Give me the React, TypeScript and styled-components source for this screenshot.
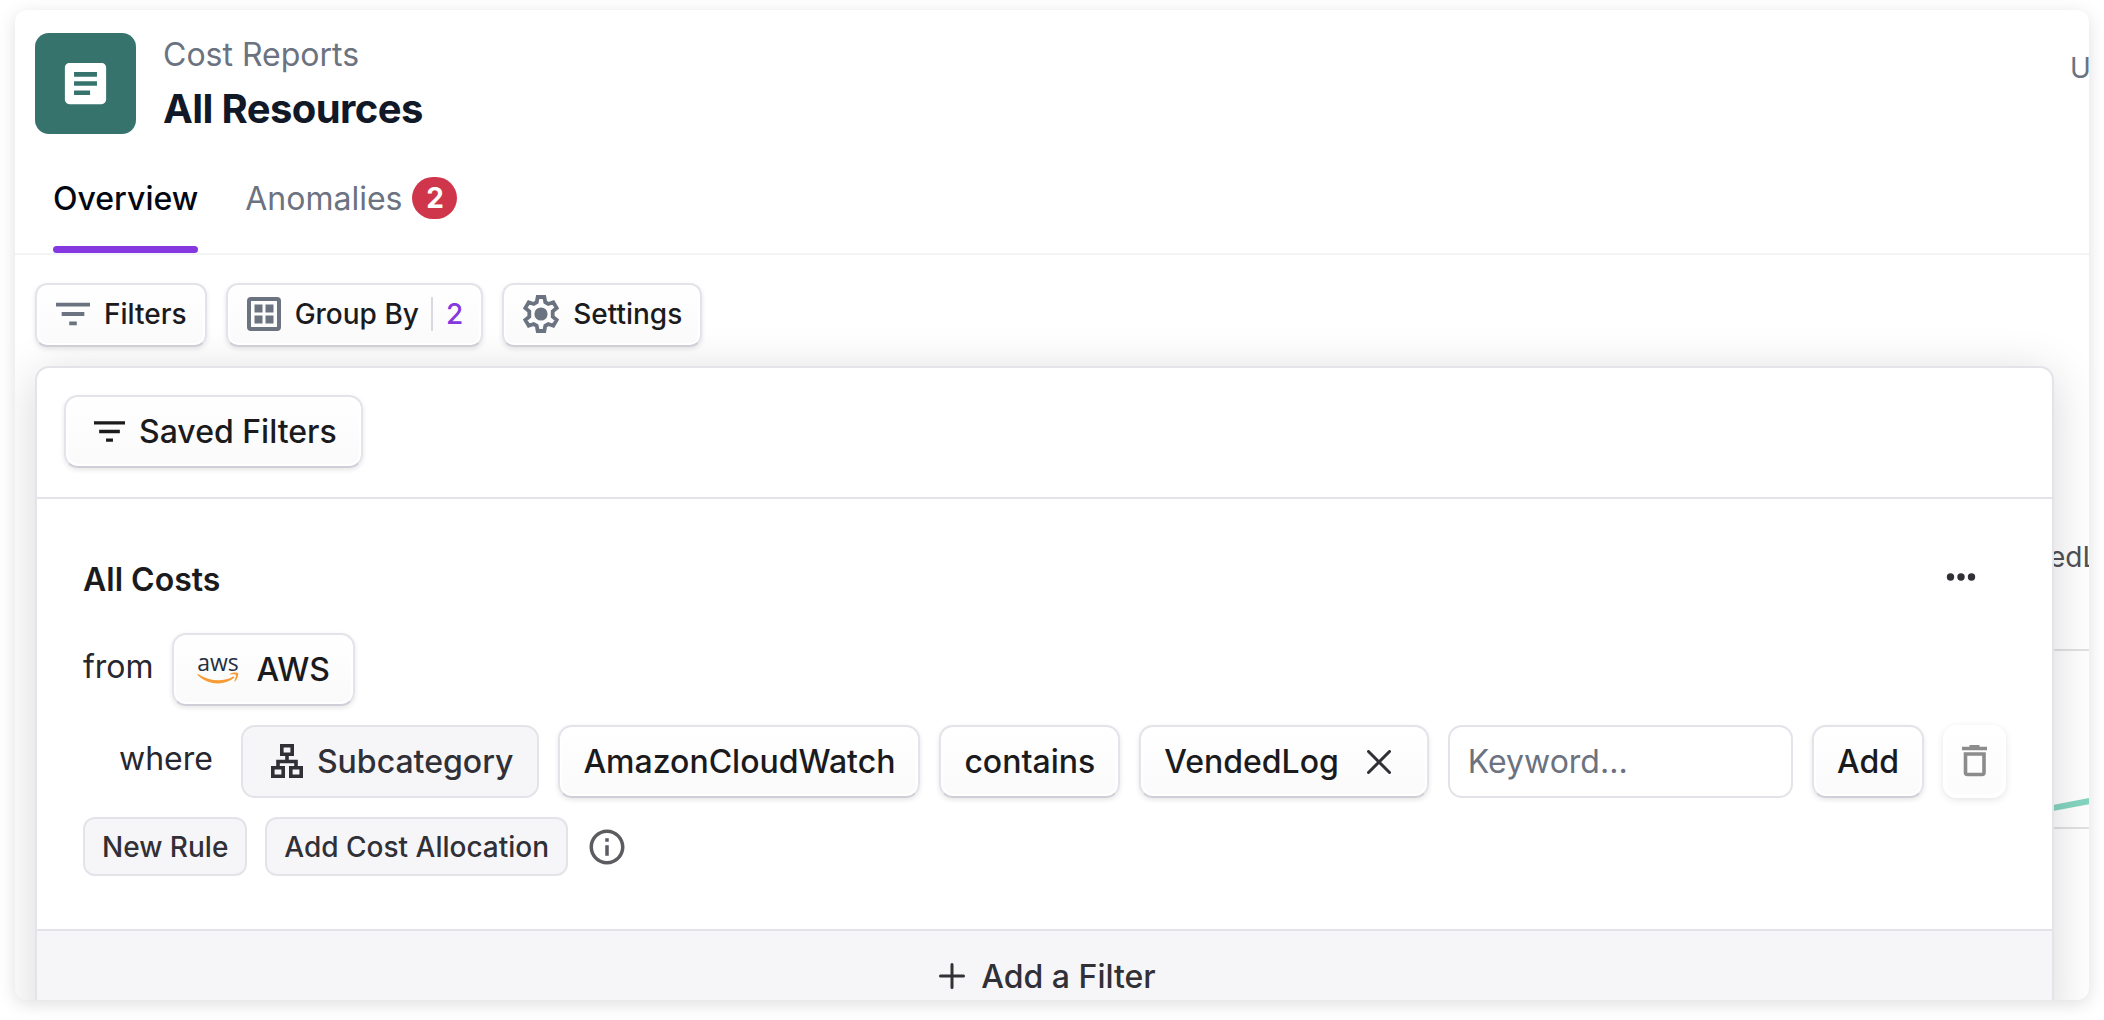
import React from "react";
import styled, { createGlobalStyle, css } from "styled-components";
import { MdArticle, MdInfoOutline } from "react-icons/md";

const Global = createGlobalStyle`
  *, *::before, *::after { box-sizing: border-box; }
  body {
    margin: 0;
    background: #fff;
    font-family: Inter, "Liberation Sans", sans-serif;
    color: #1b1b1d;
  }
  button, input { font: inherit; color: inherit; margin: 0; }
  button { cursor: pointer; }
`;

const Page = styled.div`
  display: flex;
  height: 100vh;
  padding: 10px 15px 20px;
`;

const Frame = styled.main`
  flex: 1;
  min-width: 0;
  display: flex;
  flex-direction: column;
  overflow: hidden;
  background: #fff;
  border-radius: 12px;
  box-shadow: 0 4px 18px rgba(0, 0, 0, 0.13);
`;

const Header = styled.header`
  display: flex;
  align-items: flex-start;
  gap: 27px;
  padding: 23px 0 0 20px;
`;

const ReportTile = styled.div`
  display: grid;
  place-items: center;
  width: 101px;
  height: 101px;
  border-radius: 14px;
  background: #36736c;
  color: #fff;
`;

const Titles = styled.div`
  flex: 1;
`;

const Section = styled.p`
  margin: 0;
  font-size: 32px;
  line-height: 44px;
  color: #6b7280;
`;

const Title = styled.h1`
  margin: 6px 0 0;
  font-size: 40px;
  line-height: 52px;
  font-weight: 700;
  letter-spacing: -0.015em;
  color: #111827;
`;

const Updated = styled.span`
  flex: none;
  width: 19px;
  padding-top: 17px;
  font-size: 28px;
  line-height: 36px;
  color: #6b7280;
`;

const Tabs = styled.nav`
  display: flex;
  gap: 47px;
  margin-top: 32px;
  padding: 0 38px;
  border-bottom: 2px solid #f3f4f6;
`;

const Tab = styled.a<{ $active?: boolean }>`
  display: flex;
  align-items: flex-start;
  gap: 10px;
  height: 86px;
  padding-top: 10px;
  border-bottom: 7px solid transparent;
  font-size: 32px;
  line-height: 44px;
  text-decoration: none;
  color: #6b7280;
  ${(p) =>
    p.$active &&
    css`
      font-weight: 550;
      color: #030712;
      position: relative;
      &::after {
        content: "";
        position: absolute;
        inset: auto 0 -7px;
        height: 7px;
        border-radius: 4px;
        background: #8638e0;
      }
    `}
`;

const Count = styled.span`
  width: 45px;
  height: 42px;
  border-radius: 21px;
  background: #d0364b;
  color: #fff;
  font-size: 28px;
  line-height: 42px;
  font-weight: 700;
  text-align: center;
`;

const Toolbar = styled.div`
  display: flex;
  gap: 19px;
  padding: 28px 20px 19px;
`;

const raised = css`
  border: 2px solid #e3e3e9;
  border-bottom-color: #cfcfd8;
  background: linear-gradient(#fff, #fafafb);
  box-shadow: 0 2px 5px rgba(0, 0, 0, 0.1), inset 0 0 0 2px #fff;
`;

const ToolButton = styled.button`
  ${raised}
  display: flex;
  align-items: center;
  gap: 12px;
  height: 64px;
  padding: 0 18px 2px 19px;
  border-radius: 12px;
  font-size: 28px;
  font-weight: 500;
  position: relative;
  z-index: 2;

  svg {
    margin-right: 2px;
    color: #6b7280;
  }
`;

const GroupCount = styled.span`
  padding-left: 13px;
  border-left: 2px solid #d8dae0;
  line-height: 34px;
  color: #8638e0;
`;

const Workspace = styled.div`
  flex: 1;
  min-height: 0;
  display: flex;
  padding-left: 20px;
`;

const Panel = styled.section`
  flex: 1;
  min-width: 0;
  position: relative;
  z-index: 1;
  align-self: flex-start;
  border: 2px solid #e3e3e9;
  border-radius: 14px;
  background: #fff;
  box-shadow: 0 8px 48px rgba(0, 0, 0, 0.16);
`;

const PanelHead = styled.div`
  padding: 27px 27px 29px;
  border-bottom: 2px solid #e3e3e9;
`;

const FilterBody = styled.div`
  display: flex;
  flex-direction: column;
  gap: 19px;
  padding: 58px 46px 53px;
`;

const Row = styled.div<{ $indent?: boolean; $gap?: number }>`
  display: flex;
  align-items: center;
  gap: ${(p) => p.$gap ?? 19}px;
  padding-left: ${(p) => (p.$indent ? "36px" : "0")};
`;

const BodyHead = styled.div`
  display: flex;
  align-items: flex-start;
  justify-content: space-between;
  padding-right: 26px;
  margin-bottom: 11px;
`;

const BodyTitle = styled.h2`
  margin: 0;
  font-size: 32px;
  line-height: 46px;
  font-weight: 600;
`;

const MenuButton = styled.button`
  display: flex;
  align-items: center;
  height: 40px;
  padding: 0 4px;
  border: 0;
  background: none;
`;

const Word = styled.span<{ $gap?: boolean }>`
  margin-right: ${(p) => (p.$gap ? "9px" : "0")};
  padding-bottom: 6px;
  font-size: 32px;
  line-height: 40px;
  color: #27272f;
`;

const Chip = styled.button<{ $flat?: boolean; $gap?: number; $padding?: string }>`
  ${raised}
  flex: none;
  display: inline-flex;
  align-items: center;
  gap: ${(p) => p.$gap ?? 14}px;
  height: 73px;
  padding: ${(p) => p.$padding ?? "0 23px"};
  border-radius: 14px;
  font-size: 32px;
  font-weight: 550;
  ${(p) =>
    p.$flat &&
    css`
      border-color: #e3e3e9;
      background: #f6f6f9;
      box-shadow: none;
      color: #303036;
    `}
`;

const SmallChip = styled.button`
  height: 59px;
  padding: 0 17px;
  border: 2px solid #e3e3e9;
  border-radius: 12px;
  background: #f6f6f9;
  font-size: 28px;
  font-weight: 500;
  color: #303036;
`;

const Keyword = styled.input`
  flex: 1;
  min-width: 0;
  height: 73px;
  padding: 0 18px;
  border: 2px solid #e3e3e9;
  border-radius: 14px;
  background: #fff;
  font-size: 32px;
  outline: none;
  &::placeholder { color: #6b7280; opacity: 1; }
`;

const DeleteButton = styled(Chip)`
  justify-content: center;
  width: 63px;
  padding: 0 0 2px;
  opacity: 0.5;
  border-color: #fff;
  box-shadow: 0 2px 6px rgba(0, 0, 0, 0.2), inset 0 0 0 2px #fff;
`;

const InfoButton = styled.button`
  display: flex;
  padding: 0;
  border: 0;
  background: none;
  color: #5b5b60;
`;

const AddFilter = styled.button`
  display: flex;
  justify-content: center;
  align-items: center;
  gap: 16px;
  width: 100%;
  height: 94px;
  padding: 0 0 2px 6px;
  border: 0;
  border-top: 2px solid #e3e3e9;
  border-radius: 0 0 12px 12px;
  background: #f6f6f9;
  font-size: 32px;
  font-weight: 550;
  color: #303036;
`;

const ChartEdge = styled.aside`
  flex: none;
  width: 40px;
  margin-left: -5px;
  overflow: hidden;
`;

const SeriesName = styled.div`
  padding-top: 173px;
  font-size: 28px;
  line-height: 36px;
  color: #505055;
`;

const ChartSlot = styled.div`
  display: flex;
  padding-top: 71px;
`;

const FilterIcon = ({ size }: { size: number }) => (
  <svg width={size} height={size} viewBox="3 3 18 18" fill="currentColor" aria-hidden="true">
    <path d="M10 18h4v-2h-4v2zM3 6v2h18V6H3zm3 7h12v-2H6v2z" />
  </svg>
);

const GroupIcon = () => (
  <svg width="34" height="34" viewBox="0 0 34 34" aria-hidden="true">
    <rect x="2" y="2" width="30" height="30" rx="2" fill="none" stroke="currentColor" strokeWidth="4" />
    <path d="M7.500 7.500h8v8h-8zM18.500 7.500h8v8h-8zM7.500 18.500h8v8h-8zM18.500 18.500h8v8h-8z" fill="currentColor" />
  </svg>
);

const GearIcon = () => (
  <svg width="36" height="38" viewBox="1 0 36 38" overflow="visible" aria-hidden="true">
    <path
      d="M15.700 2h6.600l1 5.200 3 1.800 5-1.800 3.400 5.800-4 3.400v5.200l4 3.400-3.400 5.800-5-1.800-3 1.800-1 5.200h-6.600l-1-5.200-3-1.800-5 1.800-3.400-5.800 4-3.400v-5.200l-4-3.400 3.400-5.800 5 1.800 3-1.800z"
      fill="none" stroke="currentColor" strokeWidth="3.800"
    />
    <circle cx="19" cy="19" r="6.600" fill="currentColor" />
  </svg>
);

const TreeIcon = () => (
  <svg width="32" height="36" viewBox="0 0 32 36" fill="none" stroke="currentColor" strokeWidth="3.600" aria-hidden="true">
    <path d="M10.800 1.800h10.400v8.400H10.800zM1.800 23.800h10.400v8.400H1.800zM19.800 23.800h10.400v8.400H19.800zM16 10v7M7 24v-6.500h18V24" />
  </svg>
);

const TrashIcon = () => (
  <svg width="26" height="32" viewBox="0 0 26 32" fill="none" stroke="currentColor" strokeWidth="3.600" aria-hidden="true">
    <path d="M0 3.500h25M7.500 1.800h10M3.500 9h18.500v18.500a2 2 0 0 1-2 2H5.500a2 2 0 0 1-2-2z" />
  </svg>
);

const CloseIcon = () => (
  <svg width="24" height="24" viewBox="0 0 24 24" stroke="#303036" strokeWidth="3" strokeLinecap="round" aria-hidden="true">
    <path d="M1.500 1.500l21 21M22.500 1.500l-21 21" />
  </svg>
);

const PlusIcon = () => (
  <svg width="26" height="26" viewBox="0 0 26 26" stroke="currentColor" strokeWidth="3" strokeLinecap="round" aria-hidden="true">
    <path d="M13 1.500v23M1.500 13h23" />
  </svg>
);

const DotsIcon = () => (
  <svg width="30" height="10" viewBox="0 0 30 10" fill="#303036" aria-hidden="true">
    <circle cx="4.500" cy="5" r="3.700" />
    <circle cx="15" cy="5" r="3.700" />
    <circle cx="25.500" cy="5" r="3.700" />
  </svg>
);

const AwsLogo = () => (
  <svg width="42" height="50" viewBox="0 -10 42 50" aria-hidden="true">
    <text x="21" y="16" textAnchor="middle" fontFamily="Open Sans, sans-serif" fontSize="23" fontWeight="500" fill="#252f3e">aws</text>
    <path d="M1 19c12 8 26 8 35 2.500 1-.5 2 .7 1 1.500C27 31 11 30 1 20.500c-.6-.8-.6-1.800 0-1.500z" fill="#f79b34" />
    <path d="M33 19c3-2 7-1.500 8-1 .6 1-.3 6-3 8.500-.6.300-.9 0-.6-.6.700-1.700 2-5 1.400-6s-4-.5-5.500-.3c-.6 0-.7-.3-.3-.6z" fill="#f79b34" />
  </svg>
);

const ChartLines = () => (
  <svg width="40" height="190" viewBox="0 0 40 190" aria-hidden="true">
    <path d="M0 4h40M0 182h40" stroke="#e2e2e2" strokeWidth="2" />
    <path d="M-1 163l47-9" stroke="#85d5c1" strokeWidth="6" />
  </svg>
);

export default function App() {
  return (
    <Page>
      <Global />
      <Frame>
        <Header>
          <ReportTile><MdArticle size={55} /></ReportTile>
          <Titles>
            <Section>Cost Reports</Section>
            <Title>All Resources</Title>
          </Titles>
          <Updated>U</Updated>
        </Header>
        <Tabs>
          <Tab href="#overview" $active>Overview</Tab>
          <Tab href="#anomalies">Anomalies<Count>2</Count></Tab>
        </Tabs>
        <Toolbar>
          <ToolButton><FilterIcon size={34} />Filters</ToolButton>
          <ToolButton><GroupIcon />Group By<GroupCount>2</GroupCount></ToolButton>
          <ToolButton><GearIcon />Settings</ToolButton>
        </Toolbar>
        <Workspace>
          <Panel>
            <PanelHead>
              <Chip $padding="0 24px 0 28px"><FilterIcon size={31} />Saved Filters</Chip>
            </PanelHead>
            <FilterBody>
              <BodyHead>
                <BodyTitle>All Costs</BodyTitle>
                <MenuButton aria-label="More options"><DotsIcon /></MenuButton>
              </BodyHead>
              <Row $gap={18}>
                <Word>from</Word>
                <Chip $gap={18}><AwsLogo />AWS</Chip>
              </Row>
              <Row $indent>
                <Word $gap>where</Word>
                <Chip $flat $padding="0 24px 0 28px"><TreeIcon />Subcategory</Chip>
                <Chip>AmazonCloudWatch</Chip>
                <Chip>contains</Chip>
                <Chip $gap={28} $padding="0 36px 0 23px">VendedLog<CloseIcon /></Chip>
                <Keyword aria-label="Keyword" placeholder="Keyword..." />
                <Chip>Add</Chip>
                <DeleteButton aria-label="Delete rule"><TrashIcon /></DeleteButton>
              </Row>
              <Row $gap={18}>
                <SmallChip>New Rule</SmallChip>
                <SmallChip>Add Cost Allocation</SmallChip>
                <InfoButton aria-label="About cost allocation"><MdInfoOutline size={42} /></InfoButton>
              </Row>
            </FilterBody>
            <AddFilter><PlusIcon />Add a Filter</AddFilter>
          </Panel>
          <ChartEdge>
            <SeriesName>edL</SeriesName>
            <ChartSlot><ChartLines /></ChartSlot>
          </ChartEdge>
        </Workspace>
      </Frame>
    </Page>
  );
}
